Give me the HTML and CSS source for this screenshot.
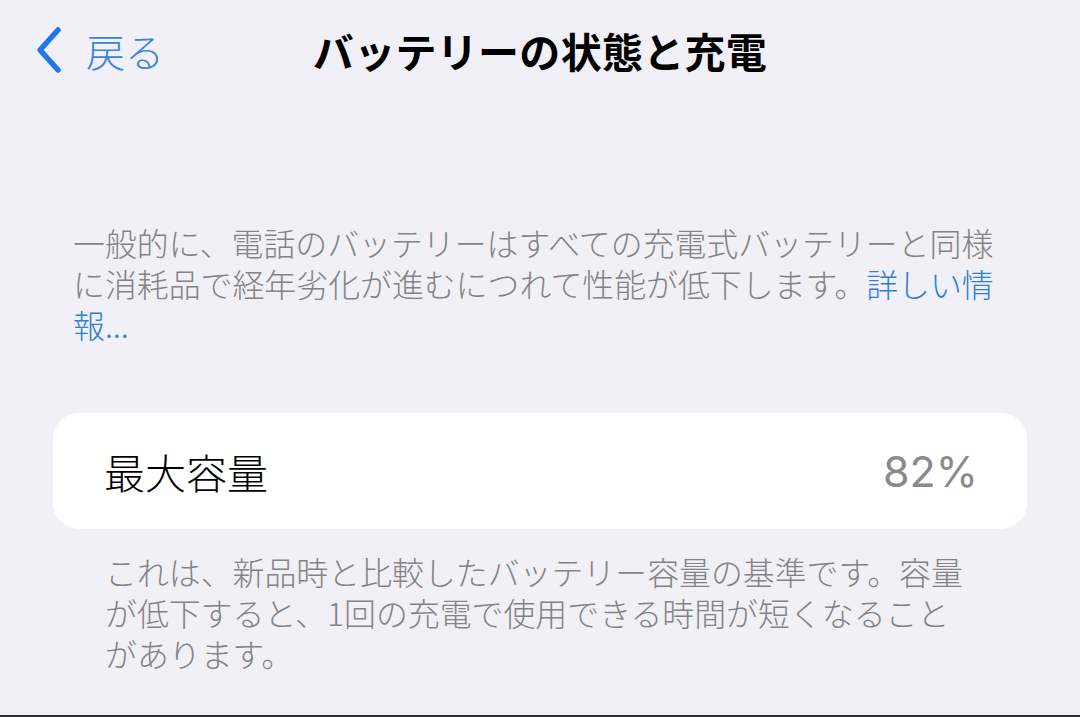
FILE: index.html
```html
<!DOCTYPE html>
<html lang="ja">
<head>
<meta charset="utf-8">
<title>バッテリーの状態と充電</title>
<link rel="stylesheet" href="styles.css">
</head>
<body>
<div class="screen">
  <header class="nav">
    <a class="back" href="#">
      <svg class="chev" width="30" height="48" viewBox="0 0 30 48" aria-hidden="true">
        <path d="M24 4 L6 24 L24 44" fill="none" stroke="currentColor" stroke-width="5.5" stroke-linecap="round" stroke-linejoin="round"/>
      </svg>
      <span class="back-label">戻る</span>
    </a>
    <h1 class="title">バッテリーの状態と充電</h1>
    <div class="nav-spacer"></div>
  </header>

  <p class="note note-top">一般的に、電話のバッテリーはすべての充電式バッテリーと同様に消耗品で経年劣化が進むにつれて性能が低下します。<a class="link" href="#">詳しい情報...</a></p>

  <section class="card">
    <span class="label">最大容量</span>
    <span class="value">82%</span>
  </section>

  <p class="note note-card">これは、新品時と比較したバッテリー容量の基準です。容量が低下すると、1回の充電で使用できる時間が短くなることがあります。</p>
</div>
</body>
</html>
```

FILE: styles.css
```css
html, body {
  margin: 0;
  padding: 0;
}

body {
  background: #f1f0f6;
  font-family: "Noto Sans CJK JP", "Noto Sans", sans-serif;
  color: #000;
}

.screen {
  height: 100vh;
  box-sizing: border-box;
  border-bottom: 2px solid #2a2a2e;
  display: flex;
  flex-direction: column;
  overflow: hidden;
}

.nav {
  height: 100px;
  display: grid;
  grid-template-columns: 1fr auto 1fr;
  align-items: center;
}

.back {
  display: flex;
  align-items: center;
  padding-left: 34px;
  color: #2a7be4;
  text-decoration: none;
}

.chev {
  display: block;
  color: #1f78ea;
}

.back-label {
  margin-left: 22px;
  font-size: 39px;
  font-weight: 300;
  line-height: 1;
  color: #3a84dc;
}

.title {
  margin: 0;
  font-size: 41px;
  font-weight: 700;
  line-height: 1;
  letter-spacing: 0.3px;
  color: #000;
}

.note {
  margin: 0;
  font-size: 31.9px;
  font-weight: 300;
  line-height: 41px;
  color: #838388;
}

.note-top {
  margin-top: 122px;
  margin-left: 73px;
  width: 930px;
}

.link {
  color: #2f7fd4;
  text-decoration: none;
}

.card {
  margin-top: 68px;
  margin-left: 53px;
  width: 974px;
  height: 116px;
  box-sizing: border-box;
  background: #fff;
  border-radius: 26px;
  display: flex;
  align-items: center;
  justify-content: space-between;
  padding: 0 49px 0 51px;
}

.label {
  font-size: 41px;
  font-weight: 300;
  line-height: 1;
  color: #000;
}

.value {
  font-family: Inter, "Noto Sans", sans-serif;
  font-size: 43px;
  font-weight: 400;
  line-height: 1;
  color: #8a8a8e;
}

.note-card {
  margin-top: 22px;
  margin-left: 105px;
  width: 870px;
}
```
